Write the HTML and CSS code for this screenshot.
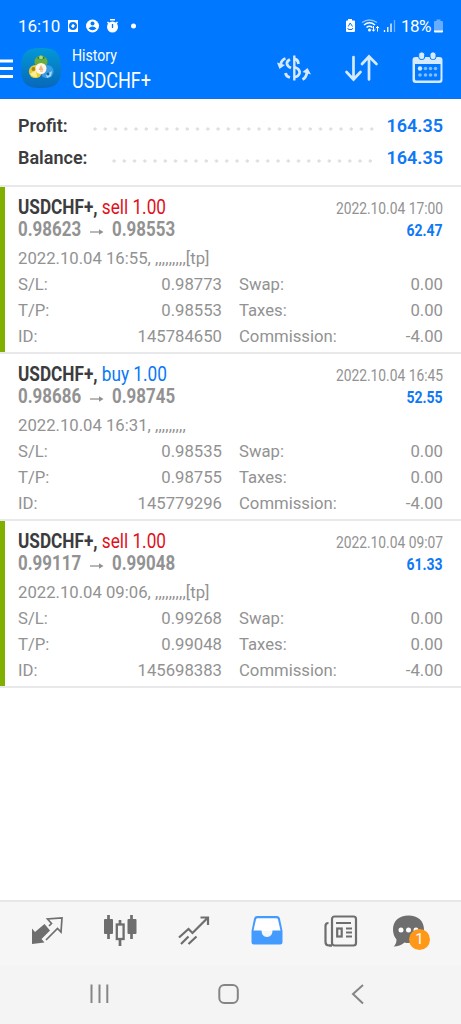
FILE: index.html
```
<!DOCTYPE html>
<html lang="en">
<head>
<meta charset="utf-8">
<title>History</title>
<link rel="stylesheet" href="styles.css">
</head>
<body>
<div class="app">
<header class="header">
  <div class="status">
    <span class="clock">16:10</span>
    <svg class="status-left" width="76" height="20" viewBox="0 0 76 20">
      <path fill="#fff" fill-rule="evenodd" d="M1 4h10v12H1zM6 6a4 4 0 1 0 0 8 4 4 0 0 0 0-8zM6 7.800l2 2-2 2.400-2-2z"/>
      <circle cx="25.500" cy="10" r="6.500" fill="#fff"/><circle cx="25.500" cy="7.500" r="2" fill="#0078ff"/><path d="M21.500 12.500q4-4 8 0-4 3.500-8 0z" fill="#0078ff"/>
      <circle cx="45.500" cy="11" r="5.500" fill="#fff"/><path d="M43 3.700h5M40.500 6l1.500 1.500M50.500 6L49 7.500" stroke="#fff" stroke-width="1.500"/><path d="M45.500 8v4" stroke="#0078ff" stroke-width="1.300"/>
      <circle cx="66.500" cy="10" r="2.500" fill="#fff"/>
    </svg>
    <svg class="status-right" width="56" height="20" viewBox="0 0 56 20">
      <path d="M4 3h4v1.500h2q1 0 1 1v9.500q0 1-1 1H3q-1 0-1-1V5.500q0-1 1-1h1z" fill="#fff"/>
      <path d="M4.200 10.500l2-3.500 2.300 3.500M9 12l-1 1.500H4.500l-.8-1.500" fill="none" stroke="#0078ff" stroke-width="1"/>
      <g fill="none" stroke="#fff" stroke-width="1.500"><path d="M18 6.500q7.500-5 15 0" opacity=".55"/><path d="M20 9q5.500-4.500 11 0M22.500 11.500q3-2.500 6 0"/></g>
      <circle cx="25.500" cy="14" r="1.500" fill="#fff"/>
      <path d="M29.500 10v5m-1.500-1.500l1.500 1.800 1.500-1.800M33.500 15.500v-5m-1.500 1.700l1.500-1.800 1.500 1.800" fill="none" stroke="#fff"/>
      <path d="M40.500 16v-2M43.800 16v-5M47 16V7.500" stroke="#fff" stroke-width="1.300"/><path d="M50.500 16V4" stroke="#6cb1ff" stroke-width="1.300"/>
    </svg>
    <span class="percent">18%</span>
    <svg class="battery" width="9" height="20" viewBox="0 0 9 20"><path d="M2.500 3.500h4V5H8q1 0 1 1v10H0V6q0-1 1-1h1.500z" fill="#66adff"/><path d="M0 14.500h9v1q0 1-1 1H1q-1 0-1-1z" fill="#fff"/></svg>
  </div>
  <div class="toolbar">
    <svg class="burger" width="14" height="20" viewBox="0 0 14 20"><path d="M0 2h13M0 9.500h13M0 17.500h13" stroke="#fff" stroke-width="3"/></svg>
    <svg class="logo" width="40" height="40" viewBox="0 0 40 40">
      <defs><linearGradient id="sea" x2="0" y2="1"><stop offset="0" stop-color="#0398d8"/><stop offset="1" stop-color="#0868b9"/></linearGradient></defs>
      <path d="M20 0C35 0 40 5 40 20S35 40 20 40 0 35 0 20 5 0 20 0z" fill="url(#sea)"/>
      <circle cx="20" cy="14" r="6.500" fill="#69ad3c"/><path d="M16 10q4-4 8 0l-4 2z" fill="#1b7b48"/><circle cx="20" cy="9.500" r="2" fill="#a9d77a"/>
      <circle cx="14.500" cy="23.500" r="6.600" fill="#e9cd35"/><path d="M9 26l6-4 1 7q-4 1-7-3z" fill="#ffed93"/><circle cx="12.500" cy="21" r="2" fill="#a98517"/>
      <circle cx="26" cy="23.500" r="6.600" fill="#3c9de3"/><path d="M25 27l6-4-1 5-4 2z" fill="#a8dcff"/><circle cx="27" cy="26" r="1.500" fill="#1265ae"/>
      <circle cx="20" cy="20.500" r="5.500" fill="#fff5e9"/><path d="M20 17l2.500 5h-5z" fill="#efb583"/><path d="M19 23h3" stroke="#e5a771"/>
    </svg>
    <div class="heading"><span class="narrow small-title">History</span><span class="narrow big-title">USDCHF+</span></div>
    <svg class="tools" width="168" height="36" viewBox="0 0 168 36">
      <g fill="none" stroke="#d5e9ff">
        <path d="M16.300 5.500v25" stroke-width="2.400"/>
        <path d="M12 9.500q-3.500 1.500-3 4.500 .5 2.500 4 4M16 9q4 0 4.500 5M16 17q6 1.500 5.500 6-.8 4-5.500 4M12 27.500q-4-1-4.500-4.500" stroke-width="2.800"/>
        <path d="M7.500 8.500Q4 9.500 2.700 14M24.500 29.500q3.700-2 4.500-7" stroke-width="2.800"/>
      </g>
      <path d="M-1 12.500l2.500 6.500 5.500-4zM24.500 22l5-4 3.500 6.500z" fill="#d5e9ff"/>
      <path d="M75.500 7v22m-7-7l7 7.500 7-7.500M91 29.500V7.500m-7 6.500L91 6.500l7.500 7.500" fill="none" stroke="#d5e9ff" stroke-width="2.700" stroke-linecap="round"/>
      <path fill-rule="evenodd" d="M137.500 7h24q3 0 3 3v20q0 3-3 3h-24q-3 0-3-3V10q0-3 3-3zM137 14v15q0 1.500 1.500 1.500h22.500q1.500 0 1.500-1.500V14z" fill="#d5e9ff"/>
      <g fill="#d5e9ff" stroke="#0078ff" stroke-width="1"><rect x="140.700" y="2" width="6" height="7.500" rx="2.500"/><rect x="152" y="2" width="6" height="7.500" rx="2.500"/></g>
      <circle cx="142" cy="18.500" r="2.200" fill="#d5e9ff"/><g fill="#83bcff"><circle cx="147.500" cy="18.500" r="1.800"/><circle cx="152.500" cy="18.500" r="1.800"/><circle cx="157.500" cy="18.500" r="1.800"/><circle cx="142" cy="25" r="1.800"/><circle cx="147.500" cy="25" r="1.800"/><circle cx="152.500" cy="25" r="1.800"/><circle cx="157.500" cy="25" r="1.800"/></g>
    </svg>
  </div>
</header>
<section class="summary">
  <div class="total"><span class="total-label">Profit:</span><span class="dots profit-dots"></span><b class="total-value">164.35</b></div>
  <div class="total"><span class="total-label">Balance:</span><span class="dots balance-dots"></span><b class="total-value">164.35</b></div>
</section>
<main class="deals">
  <article class="deal tp">
    <div class="line title-line"><span class="narrow title"><b>USDCHF+,</b> <span class="sell">sell 1.00</span></span><span class="narrow right date">2022.10.04 17:00</span></div>
    <div class="line price-line"><span class="prices"><b class="narrow price">0.98623</b><svg class="arrow" width="14" height="8" viewBox="0 0 14 8"><path d="M0 4h12" stroke="#929292" stroke-width="1.300"/><path d="M9 1.200L13.500 4 9 6.800z" fill="#929292"/></svg><b class="narrow price">0.98553</b></span><b class="narrow right gain">62.47</b></div>
    <div class="comment">2022.10.04 16:55, <span class="commas">,,,,,,,,,</span>[tp]</div>
    <div class="grid"><span>S/L:</span><span>0.98773</span><span>Swap:</span><span>0.00</span><span>T/P:</span><span>0.98553</span><span>Taxes:</span><span>0.00</span><span>ID:</span><span>145784650</span><span>Commission:</span><span>-4.00</span></div>
  </article>
  <article class="deal">
    <div class="line title-line"><span class="narrow title"><b>USDCHF+,</b> <span class="buy">buy 1.00</span></span><span class="narrow right date">2022.10.04 16:45</span></div>
    <div class="line price-line"><span class="prices"><b class="narrow price">0.98686</b><svg class="arrow" width="14" height="8" viewBox="0 0 14 8"><path d="M0 4h12" stroke="#929292" stroke-width="1.300"/><path d="M9 1.200L13.500 4 9 6.800z" fill="#929292"/></svg><b class="narrow price">0.98745</b></span><b class="narrow right gain">52.55</b></div>
    <div class="comment">2022.10.04 16:31, <span class="commas">,,,,,,,,,</span></div>
    <div class="grid"><span>S/L:</span><span>0.98535</span><span>Swap:</span><span>0.00</span><span>T/P:</span><span>0.98755</span><span>Taxes:</span><span>0.00</span><span>ID:</span><span>145779296</span><span>Commission:</span><span>-4.00</span></div>
  </article>
  <article class="deal tp">
    <div class="line title-line"><span class="narrow title"><b>USDCHF+,</b> <span class="sell">sell 1.00</span></span><span class="narrow right date">2022.10.04 09:07</span></div>
    <div class="line price-line"><span class="prices"><b class="narrow price">0.99117</b><svg class="arrow" width="14" height="8" viewBox="0 0 14 8"><path d="M0 4h12" stroke="#929292" stroke-width="1.300"/><path d="M9 1.200L13.500 4 9 6.800z" fill="#929292"/></svg><b class="narrow price">0.99048</b></span><b class="narrow right gain">61.33</b></div>
    <div class="comment">2022.10.04 09:06, <span class="commas">,,,,,,,,,</span>[tp]</div>
    <div class="grid"><span>S/L:</span><span>0.99268</span><span>Swap:</span><span>0.00</span><span>T/P:</span><span>0.99048</span><span>Taxes:</span><span>0.00</span><span>ID:</span><span>145698383</span><span>Commission:</span><span>-4.00</span></div>
  </article>
</main>
<nav class="tabs">
  <svg width="34" height="34" viewBox="0 0 34 34"><path d="M2 13.500l3 3.500L14.500 9l5.500 6.500-8.500 8.500 3 3.500-12.500 1.500z" fill="#6e6e6e"/><path d="M19 11l2.500-2.500-4-4.500 14.500-1-1 14-3.500-3.500L16 25" fill="none" stroke="#6e6e6e" stroke-width="1.700"/></svg>
  <svg width="34" height="34" viewBox="0 0 34 34"><path d="M5.500 0v24M28.500 0v24M17 5v26" stroke="#6e6e6e" stroke-width="2.700"/><rect x="1" y="4" width="9" height="15" rx="1" fill="#6e6e6e"/><rect x="24.500" y="4" width="9" height="15" rx="1" fill="#6e6e6e"/><rect x="13.800" y="9.500" width="6.800" height="14.500" fill="#f5f5f5" stroke="#6e6e6e" stroke-width="2.300"/></svg>
  <svg width="34" height="34" viewBox="0 0 34 34"><path d="M2 22.500l9.500-8.500 4 4L31 2.500M23.500 2.500H31V10M4 29l7.500-7.500M11.500 29l8-7.500" fill="none" stroke="#6e6e6e" stroke-width="2.200"/></svg>
  <svg width="34" height="34" viewBox="0 0 34 34"><path d="M6 3h22l4 13H2z" fill="#fff"/><path fill-rule="evenodd" d="M7 1h20q2 0 2.800 2L32.500 16v11q0 2.500-2.500 2.500H4Q1.500 29.500 1.500 27V16L4.200 3Q5 1 7 1zM7.500 3.300q-1 0-1.500 1.200L3.500 15.500h8q0 6.500 5.500 6.500t5.500-6.500h8L28 4.500q-.5-1.200-1.500-1.200z" fill="#439aff"/></svg>
  <svg width="34" height="34" viewBox="0 0 34 34"><g fill="none" stroke="#6e6e6e" stroke-width="2.200"><path d="M8 30.500H5Q1.500 30.500 1.500 27V11q0-3 3-3"/><rect x="8" y="1.500" width="24" height="29" rx="2.500"/><path d="M12 8h15M22 13.500h6M22 17.500h6M22 21.500h6M8 30.500H5"/><rect x="13.200" y="13.500" width="4.500" height="8"/></g></svg>
  <div class="chat"><svg width="34" height="34" viewBox="0 0 34 34"><path d="M16.500.500C26 .5 32 6 32 14.500S26 28 16.500 28q-2 0-4-.5Q8 31.500 1.500 31.500q3-2.500 3-7Q1 20.500 1 14.500C1 6 7 .5 16.500.500z" fill="#6e6e6e"/><g fill="#fff"><circle cx="9" cy="15" r="2.500"/><circle cx="16.500" cy="15" r="2.500"/><circle cx="24" cy="15" r="2.500"/></g></svg><span class="badge">1</span></div>
</nav>
<footer class="system">
  <svg width="461" height="59" viewBox="0 0 461 59"><g fill="none" stroke="#858585" stroke-width="2"><path d="M91.500 19.500v18.500M99.500 19.500v18.500M107.300 19.500v18.500"/><rect x="219.300" y="20" width="18.500" height="18" rx="5"/><path d="M363 20l-10 9 10 9.500"/></g></svg>
</footer>
</div>
</body>
</html>
```
FILE: styles.css
```
* { box-sizing: border-box; }
body { margin: 0; background: #fff; font-family: Roboto, "Liberation Sans", sans-serif; color: #3c3c3e; }
svg { display: block; flex: none; }
.app { width: 461px; height: 1024px; display: flex; flex-direction: column; overflow: hidden; }
.header { height: 99px; background: #0078ff; color: #fff; padding-top: 16px; flex: none; border-bottom: 1px solid #1671da; }
.status { display: flex; height: 20px; padding-left: 18px; padding-right: 18px; align-items: center; }
.clock, .percent { font-size: 17px; line-height: 20px; white-space: nowrap; }
.clock { width: 49px; }
.status-right { margin-left: auto; }
.percent { width: 33px; margin-left: 1px; letter-spacing: -.6px; }
.toolbar { display: flex; height: 62px; padding-top: 10px; }
.burger { margin: 13px 7px 0 0; }
.logo { margin-top: 2px; }
.heading { width: 217px; padding-left: 11px; display: flex; flex-direction: column; align-items: flex-start; }
.tools { margin-top: 4px; overflow: visible; }
.narrow { display: inline-block; white-space: nowrap; transform: scaleX(.86); transform-origin: left center; }
.small-title { font-size: 16.5px; line-height: 20px; margin-top: 0; transform: scaleX(.855); }
.big-title { font-size: 22px; line-height: 26px; margin-top: 2px; transform: scaleX(.82); }
.summary { height: 88px; flex: none; padding: 11px 18px 0; border-bottom: 2px solid #e9e9eb; }
.total { display: flex; height: 32px; align-items: center; }
.total-label, .total-value { font-size: 18px; line-height: 32px; }
.total-label { font-weight: 600; }
.total-value { margin-left: 11px; color: #0f78f5; font-weight: 600; }
.dots { height: 4px; margin-top: 6px; background: radial-gradient(circle at 2px 2px, #dedede 1.3px, transparent 1.9px) 0 0 / 10.25px 4px; }
.profit-dots { width: 282px; margin-left: auto; }
.balance-dots { width: 263px; margin-left: auto; }
.deals { flex: 1; min-height: 0; }
.deal { height: 167px; padding: 9px 18px 0; border-bottom: 2px solid #e9e9eb; }
.deal.tp { background: linear-gradient(#7fb000, #7fb000) left top / 5px 100% no-repeat; }
.line { display: flex; justify-content: space-between; }
.title-line { height: 22px; }
.title { font-size: 20px; line-height: 22px; }
.sell { color: #df101c; }
.buy { color: #0878f8; }
.right { transform-origin: right center; }
.date { font-size: 16.5px; line-height: 25px; color: #929292; transform: scaleX(.837); }
.price-line { height: 22px; }
.prices { display: flex; align-items: flex-start; }
.price { width: 63px; font-size: 20px; line-height: 22px; color: #929292; transform: scaleX(.846); }
.arrow { margin: 10px 8px 0 9px; }
.gain { color: #0f78f5; font-size: 16.5px; line-height: 25px; transform: scaleX(.85); }
.comment { margin-top: 6px; height: 26px; line-height: 26px; font-size: 16.7px; color: #929292; white-space: nowrap; }
.commas { letter-spacing: .15px; }
.grid { display: grid; grid-template-columns: 70px 134px 121px 100px; grid-auto-rows: 25.8px; line-height: 26px; font-size: 16.7px; color: #929292; }
.grid span:nth-child(even) { text-align: right; }
.grid span:nth-child(4n + 3) { padding-left: 17px; }
.tabs { height: 65px; flex: none; border-top: 2px solid #e7e7e7; background: #f6f6f6; padding: 13px 34px 0 30px; display: grid; grid-template-columns: 73px 74px 73.500px 74px 73.500px 34px; justify-content: start; }
.tabs > svg:nth-child(n + 2) { margin-left: -.5px; }
.chat { position: relative; width: 34px; height: 34px; margin-left: -6px; }
.badge { position: absolute; left: 17px; top: 14px; width: 21px; height: 21px; border-radius: 50%; background: #ff9818; color: #fff; text-align: center; font-size: 15px; line-height: 21px; }
.system { height: 59px; flex: none; background: #f4f4f4; }
```
